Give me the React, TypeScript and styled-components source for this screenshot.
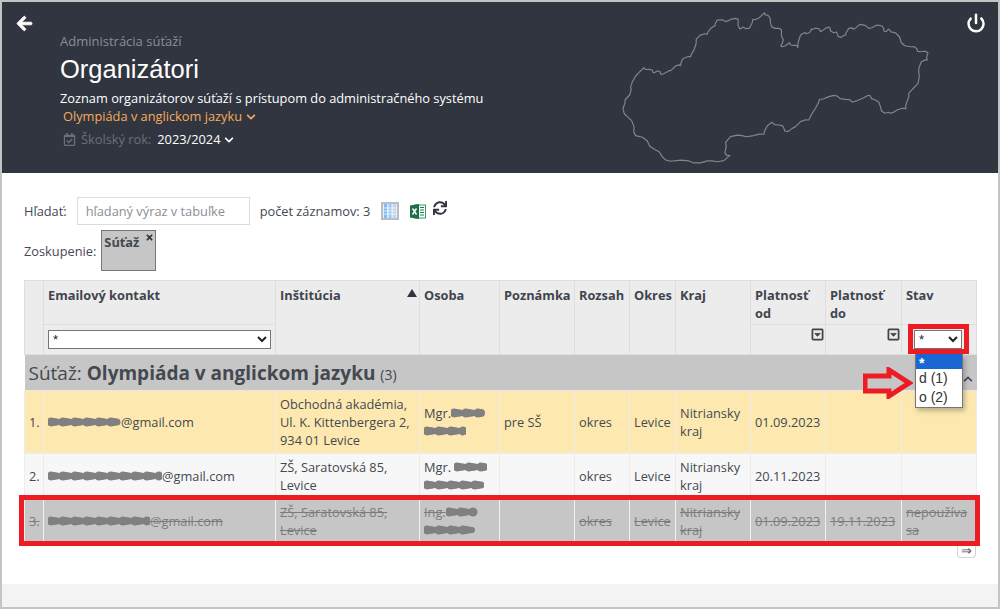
import styled, { createGlobalStyle } from "styled-components";
import { FaArrowLeft, FaChevronDown, FaChevronUp, FaRegCalendarCheck, FaRegCaretSquareDown, FaSync, FaTimes } from "react-icons/fa";
import { Power } from "lucide-react";

const SLOVAKIA =
  "135,203 150,208 163,218 175,213 185,222 200,218 215,212 230,198 245,197 252,176 275,170 285,150 292,118 303,106 325,102 335,85 348,78 355,60 380,64 395,58 418,58 423,87 435,82 452,84 462,58 480,54 497,38 507,45 515,70 528,85 548,90 553,118 546,137 560,137 572,128 585,136 597,142 605,105 620,98 632,98 637,87 650,84 665,94 680,85 693,83 705,98 715,100 727,112 740,105 750,85 765,88 783,73 810,85 835,75 855,85 862,95 870,87 890,98 908,128 935,140 955,147 965,155 988,158 986,180 968,185 960,215 958,250 930,280 925,305 922,326 895,330 875,340 858,340 845,320 830,300 813,286 795,293 760,306 740,298 715,288 690,290 662,298 650,325 630,360 605,365 590,380 567,395 555,385 540,375 520,367 505,378 495,403 460,408 430,407 395,410 380,428 378,458 393,467 375,482 340,483 305,489 270,483 215,484 190,470 165,447 145,423 110,407 105,380 85,350 72,325 78,300 92,285 95,260 110,228 125,212";

// the border in the picture is rough, so every segment gets a small kink
function roughen(points: string) {
  const pts = points.split(" ").map((p) => p.split(",").map(Number));
  return pts
    .map(([x, y], i) => {
      const [nx, ny] = pts[(i + 1) % pts.length];
      const kink = i % 2 ? 3 : -3;
      return `${x},${y} ${(x + nx) / 2 + kink},${(y + ny) / 2 - kink}`;
    })
    .join(" ");
}

const COLUMN_WIDTHS = [19, 232, 144, 80, 75, 55, 46, 75, 75, 76, 75];

type Row = {
  n: number;
  mailWidth: number;
  institution: string;
  title: string;
  titleSmudge: number;
  nameSmudge: number;
  note?: string;
  from: string;
  to?: string;
  state?: string;
  tone: "current" | "plain" | "off";
};

const rows: Row[] = [
  { n: 1, mailWidth: 73, institution: "Obchodná akadémia, Ul. K. Kittenbergera 2, 934 01 Levice", title: "Mgr.", titleSmudge: 35, nameSmudge: 42, note: "pre SŠ", from: "01.09.2023", tone: "current" },
  { n: 2, mailWidth: 114, institution: "ZŠ, Saratovská 85, Levice", title: "Mgr. ", titleSmudge: 33, nameSmudge: 60, from: "20.11.2023", tone: "plain" },
  { n: 3, mailWidth: 102, institution: "ZŠ, Saratovská 85, Levice", title: "Ing.", titleSmudge: 32, nameSmudge: 53, from: "01.09.2023", to: "19.11.2023", state: "nepoužíva sa", tone: "off" },
];

const rowColors = { current: "#fde9b0", plain: "#f7f7f7", off: "#c6c6c6" };

function Smudge({ width }: { width: number }) {
  const dots = [];
  for (let x = 3; x < width - 2; x += 3) {
    dots.push(<circle key={x} cx={x} cy={6 + ((x * 7) % 3) - 1} r={3 + ((x * 5) % 4) * 0.5} />);
  }
  return (
    <SmudgeSvg width={width} height={12} viewBox={`0 0 ${width} 12`} aria-hidden="true">
      {dots}
    </SmudgeSvg>
  );
}

export default function App() {
  return (
    <>
      <GlobalStyle />
      <Page>
        <Header>
          <BackLink href="#">
            <FaArrowLeft size={17} />
          </BackLink>
          <HeaderText>
            <Kicker>Administrácia súťaží</Kicker>
            <Title>Organizátori</Title>
            <Subtitle>Zoznam organizátorov súťaží s prístupom do administračného systému</Subtitle>
            <ContestPicker>
              Olympiáda v anglickom jazyku <FaChevronDown size={10} />
            </ContestPicker>
            <YearRow>
              <FaRegCalendarCheck size={13} />
              <YearLabel>Školský rok:</YearLabel>
              <YearValue>
                2023/2024 <FaChevronDown size={10} />
              </YearValue>
            </YearRow>
          </HeaderText>
          <MapOutline viewBox="60 30 940 465" aria-hidden="true">
            <polygon points={roughen(SLOVAKIA)} />
          </MapOutline>
          <PowerLink href="#">
            <Power size={20} strokeWidth={3} />
          </PowerLink>
        </Header>

        <Main>
          <SearchBar>
            <span>Hľadať:</span>
            <SearchInput placeholder="hľadaný výraz v tabuľke" />
            <Count>počet záznamov: 3</Count>
            <ColumnsIcon />
            <ExcelIcon />
            <RefreshButton>
              <FaSync size={14} />
            </RefreshButton>
          </SearchBar>

          <GroupBar>
            <span>Zoskupenie:</span>
            <GroupChip>
              Súťaž
              <ChipClose>
                <FaTimes size={9} />
              </ChipClose>
            </GroupChip>
          </GroupBar>

          <TableWrap>
            <Table>
              <colgroup>
                {COLUMN_WIDTHS.map((w, i) => (
                  <col key={i} style={{ width: w }} />
                ))}
              </colgroup>
              <thead>
                <tr>
                  <Th rowSpan={2} />
                  <Th>Emailový kontakt</Th>
                  <Th rowSpan={2}>
                    <SortedLabel>
                      Inštitúcia
                      <SortMark />
                    </SortedLabel>
                  </Th>
                  <Th rowSpan={2}>Osoba</Th>
                  <Th rowSpan={2}>Poznámka</Th>
                  <Th rowSpan={2}>Rozsah</Th>
                  <Th rowSpan={2}>Okres</Th>
                  <Th rowSpan={2}>Kraj</Th>
                  <Th>Platnosť od</Th>
                  <Th>Platnosť do</Th>
                  <Th>Stav</Th>
                </tr>
                <tr>
                  <FilterCell>
                    <FilterSelect>
                      <option>*</option>
                    </FilterSelect>
                  </FilterCell>
                  <FilterCell>
                    <DateFilter>
                      <FaRegCaretSquareDown size={13} />
                    </DateFilter>
                  </FilterCell>
                  <FilterCell>
                    <DateFilter>
                      <FaRegCaretSquareDown size={13} />
                    </DateFilter>
                  </FilterCell>
                  <FilterCell>
                    <StateSelect>
                      <option>*</option>
                    </StateSelect>
                  </FilterCell>
                </tr>
              </thead>
              <tbody>
                <tr>
                  <GroupCell colSpan={11}>
                    <GroupLine>
                      <span>
                        Súťaž: <strong>Olympiáda v anglickom jazyku</strong> <GroupCount>(3)</GroupCount>
                      </span>
                      <FaChevronUp size={10} />
                    </GroupLine>
                  </GroupCell>
                </tr>
                {rows.map((r) => (
                  <DataRow key={r.n} $tone={r.tone}>
                    <IndexCell>{r.n}.</IndexCell>
                    <Td>
                      <Smudge width={r.mailWidth} />
                      @gmail.com
                    </Td>
                    <Td>{r.institution}</Td>
                    <Td>
                      {r.title}
                      <Smudge width={r.titleSmudge} />
                      <br />
                      <Smudge width={r.nameSmudge} />
                    </Td>
                    <Td>{r.note}</Td>
                    <Td>okres</Td>
                    <Td>Levice</Td>
                    <Td>Nitriansky kraj</Td>
                    <Td>{r.from}</Td>
                    <Td>{r.to}</Td>
                    <Td>{r.state}</Td>
                  </DataRow>
                ))}
              </tbody>
            </Table>

            <ScrollHint>⇒</ScrollHint>

            <RowFrame />
            <SelectFrame />
            <StateList>
              <StateOption $active>*</StateOption>
              <StateOption>d (1)</StateOption>
              <StateOption>o (2)</StateOption>
            </StateList>
            <PointerArrow viewBox="0 0 50 32" aria-hidden="true">
              <polygon points="2,9 26,9 26,3 46,16 26,29 26,24 2,24" />
            </PointerArrow>
          </TableWrap>
        </Main>

        <Footer />
      </Page>
    </>
  );
}

function ColumnsIcon() {
  return (
    <IconSvg width="18" height="18" viewBox="0 0 18 18">
      <rect width="18" height="18" fill="#b4bfcc" />
      <rect x="2" y="2" width="14" height="14" fill="#e3ecf6" />
      <rect x="3" y="2" width="3" height="14" fill="#7fbcf6" />
      <rect x="7.5" y="2" width="3" height="14" fill="#9ccbf7" />
      <rect x="12" y="2" width="3" height="14" fill="#c5d4e4" />
      <path d="M2 6h14M2 9h14M2 12h14" stroke="#ffffff" strokeWidth="0.7" />
    </IconSvg>
  );
}

function ExcelIcon() {
  return (
    <IconSvg width="16" height="15" viewBox="0 0 16 15">
      <rect x="5" y="1" width="10.5" height="13" fill="#ffffff" stroke="#21a366" />
      <path d="M10 3.5h4M10 6h4M10 8.5h4M10 11h4" stroke="#21764a" strokeWidth="1.2" />
      <path d="M0 1.5 9 0v15L0 13.5z" fill="#1d7044" />
      <path d="M2.5 4.5 6.5 10.5M6.5 4.5 2.5 10.5" stroke="#ffffff" strokeWidth="1.4" />
    </IconSvg>
  );
}

const GlobalStyle = createGlobalStyle`
  html, body {
    margin: 0;
    padding: 0;
  }
  body {
    font-family: "Open Sans", "Liberation Sans", sans-serif;
    font-size: 12.8px;
    line-height: 18px;
    color: #444950;
    background: #fff;
  }
`;

const Page = styled.div`
  box-sizing: border-box;
  width: 1000px;
  height: 609px;
  border: 2px solid #c4c4c4;
  display: flex;
  flex-direction: column;
  overflow: hidden;
`;

const Header = styled.header`
  display: flex;
  height: 171px;
  flex: none;
  background: #30353f;
  color: #fff;
`;

const BackLink = styled.a`
  flex: none;
  width: 58px;
  box-sizing: border-box;
  padding: 13px 0 0 14px;
  color: #fff;
  svg {
    stroke: currentColor;
    stroke-width: 25;
  }
`;

const HeaderText = styled.div`
  flex: none;
  width: 560px;
  padding-top: 30px;
`;

const Kicker = styled.div`
  color: #8b8e95;
  font-size: 13px;
`;

const Title = styled.h1`
  margin: 0;
  font-family: "Liberation Sans", Arial, sans-serif;
  font-size: 25.5px;
  font-weight: 400;
  line-height: 38px;
  height: 39px;
`;

const Subtitle = styled.div``;

const ContestPicker = styled.div`
  padding-left: 3px;
  color: #f6ab5c;
  svg {
    margin-left: 1px;
    vertical-align: -1px;
  }
`;

const YearRow = styled.div`
  display: flex;
  align-items: center;
  height: 18px;
  margin-top: 5px;
  padding-left: 3px;
  color: #6d7076;
`;

const YearLabel = styled.span`
  margin: 0 6px 0 5px;
`;

const YearValue = styled.span`
  color: #fff;
  svg {
    vertical-align: -1px;
  }
`;

const MapOutline = styled.svg`
  flex: none;
  width: 313px;
  height: 155px;
  margin: 8px 0 0 -1px;
  polygon {
    fill: none;
    stroke: #83868c;
    stroke-width: 3.5;
    stroke-linejoin: round;
  }
`;

const PowerLink = styled.a`
  flex: none;
  margin: 11px 0 0 34px;
  color: #fff;
  height: 20px;
`;

const Main = styled.main`
  flex: 1;
  padding: 24px 22px 0;
  background: #fff;
`;

const SearchBar = styled.div`
  display: flex;
  align-items: center;
  height: 28px;
`;

const SearchInput = styled.input`
  box-sizing: border-box;
  width: 173px;
  height: 28px;
  margin: 0 10px 0 10px;
  padding: 0 8px;
  border: 1px solid #dcdcdc;
  outline: none;
  font: inherit;
  &::placeholder {
    color: #8a8f96;
    opacity: 1;
  }
`;

const Count = styled.span`
  margin-right: 11px;
`;

const IconSvg = styled.svg`
  flex: none;
  margin-right: 11px;
`;

const RefreshButton = styled.span`
  display: flex;
  margin: -7px 0 0 -4px;
  color: #30353f;
`;

const GroupBar = styled.div`
  display: flex;
  align-items: center;
  gap: 5px;
  margin-top: 5px;
`;

const GroupChip = styled.div`
  box-sizing: border-box;
  position: relative;
  width: 55px;
  height: 41px;
  padding: 2px;
  border: 1px solid #777;
  background: #c6c6c6;
  font-weight: 700;
`;

const ChipClose = styled.span`
  position: absolute;
  top: 1px;
  right: 1px;
  line-height: 10px;
  color: #30353f;
`;

const TableWrap = styled.div`
  position: relative;
  width: 952px;
  margin-top: 9px;
`;

const Table = styled.table`
  width: 952px;
  table-layout: fixed;
  border-collapse: collapse;
`;

const Th = styled.th`
  height: 44px;
  box-sizing: border-box;
  padding: 5px 4px 0 4px;
  border: 1px solid #dedede;
  background: #ececec;
  color: #40454d;
  text-align: left;
  vertical-align: top;
  font-weight: 700;
`;

const SortedLabel = styled.div`
  display: flex;
  justify-content: space-between;
`;

const SortMark = styled.span`
  width: 0;
  height: 0;
  margin: 3px -2px 0 0;
  border-left: 5px solid transparent;
  border-right: 5px solid transparent;
  border-bottom: 8px solid #30353f;
`;

const FilterCell = styled.td`
  height: 30px;
  box-sizing: border-box;
  padding: 5px 4px 0 4px;
  border: 1px solid #dedede;
  background: #ececec;
  vertical-align: top;
`;

const FilterSelect = styled.select`
  display: block;
  box-sizing: border-box;
  width: 223px;
  height: 19px;
  background: #fff;
  border: 1px solid #767676;
  font-family: "Liberation Sans", sans-serif;
  font-size: 13px;
  color: #222;
`;

const StateSelect = styled(FilterSelect)`
  width: 48px;
  margin: 0 0 0 8px;
`;

const DateFilter = styled.div`
  display: flex;
  justify-content: flex-end;
  margin: -2px -3px 0 0;
  color: #40454d;
  svg {
    stroke: currentColor;
    stroke-width: 20;
  }
`;

const GroupCell = styled.td`
  height: 36px;
  box-sizing: border-box;
  padding: 3px 4px 0 4px;
  background: #c6c6c6;
  font-size: 19px;
  border-bottom: 1px solid #e8e8e8;
`;

const GroupLine = styled.div`
  display: flex;
  align-items: center;
  justify-content: space-between;
  line-height: 24px;
  strong {
    font-weight: 700;
  }
  svg {
    margin: 10px 0 0 0;
  }
`;

const GroupCount = styled.span`
  font-size: 14px;
`;

const DataRow = styled.tr<{ $tone: Row["tone"] }>`
  background: ${(p) => rowColors[p.$tone]};
  ${(p) =>
    p.$tone === "off" &&
    `
    color: #7c7c7c;
    text-decoration: line-through;
    td { border-color: #efefef; }
  `}
`;

const Td = styled.td`
  padding: 4px 2px 4px 4px;
  border: 1px solid #ececec;
  border-top: 0;
  overflow-wrap: break-word;
`;

const IndexCell = styled(Td)`
  padding: 0 0 0 4px;
`;

const SmudgeSvg = styled.svg`
  vertical-align: -2px;
  fill: #808080;
`;

const ScrollHint = styled.div`
  position: absolute;
  right: 0;
  top: 265px;
  box-sizing: border-box;
  width: 19px;
  height: 13px;
  border: 1px solid #d4d4d4;
  border-top: 0;
  border-radius: 0 0 4px 4px;
  color: #555;
  font-size: 13px;
  line-height: 11px;
  text-align: center;
`;

const RowFrame = styled.div`
  position: absolute;
  left: -5px;
  top: 215px;
  width: 961px;
  height: 51px;
  box-sizing: border-box;
  border: 5px solid #ed1c24;
  pointer-events: none;
`;

const SelectFrame = styled.div`
  position: absolute;
  left: 884px;
  top: 44px;
  width: 61px;
  height: 30px;
  box-sizing: border-box;
  border: 5px solid #ed1c24;
`;

const StateList = styled.div`
  position: absolute;
  left: 891px;
  top: 74px;
  width: 48px;
  box-sizing: border-box;
  border: 1px solid #767676;
  border-top: 0;
  background: #fff;
  box-shadow: 2px 3px 5px rgba(0, 0, 0, 0.25);
  font-family: "Liberation Sans", sans-serif;
  font-size: 14px;
  line-height: 19px;
  color: #333;
`;

const StateOption = styled.div<{ $active?: boolean }>`
  padding-left: 3px;
  height: ${(p) => (p.$active ? 15 : 19)}px;
  ${(p) => p.$active && "background: #1967d2; color: #fff; line-height: 18px; font-weight: 700;"}
`;

const PointerArrow = styled.svg`
  position: absolute;
  left: 839px;
  top: 87px;
  width: 50px;
  height: 32px;
  polygon {
    fill: none;
    stroke: #ed1c24;
    stroke-width: 5;
  }
`;

const Footer = styled.footer`
  flex: none;
  height: 23px;
  background: #f3f3f3;
`;
